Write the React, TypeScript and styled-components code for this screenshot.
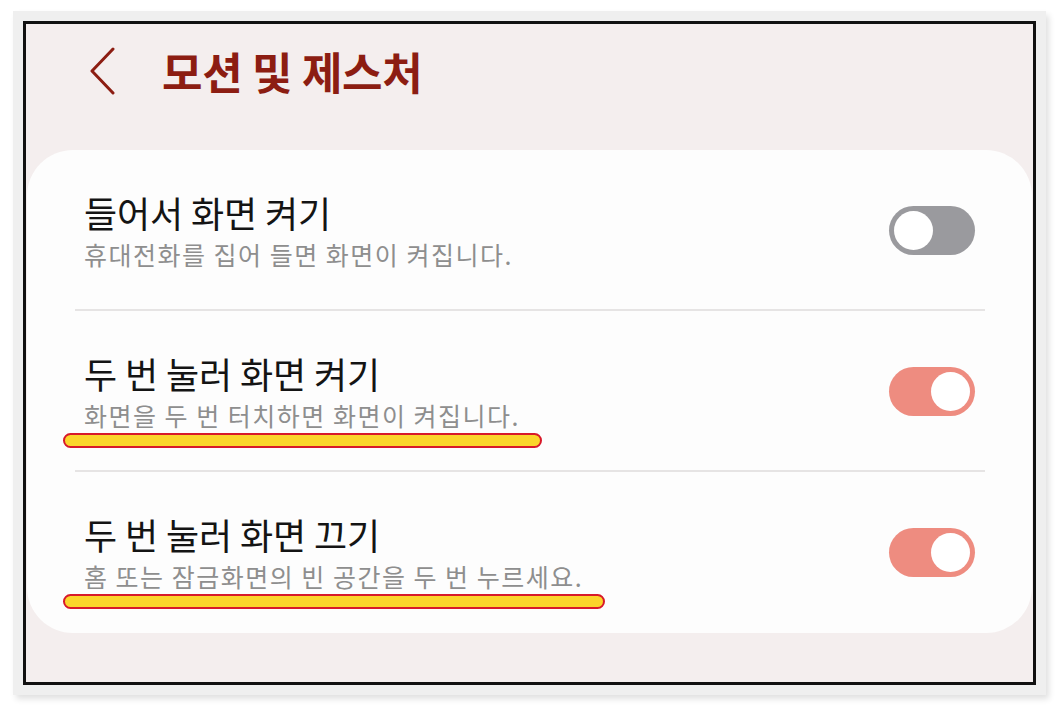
import React from "react";
import styled, { createGlobalStyle } from "styled-components";

const FRAME_BG = "#f4eeee";
const CARD_BG = "#fdfdfd";
const ACCENT = "#8c1d12";
const TITLE = "#141414";
const SUB = "#8e8e8e";
const DIVIDER = "#e6e4e4";
const OFF = "#9a9a9e";
const ON = "#ee8c80";

const GlobalStyle = createGlobalStyle`
  html, body {
    margin: 0;
    padding: 0;
    background: #ffffff;
  }
  body {
    font-family: "Noto Sans CJK KR", "Noto Sans", sans-serif;
  }
`;

const Page = styled.div`
  width: 1060px;
  height: 710px;
  padding: 21px 24px 25px 23px;
  box-sizing: border-box;
`;

const Frame = styled.div`
  height: 664px;
  box-sizing: border-box;
  border: 3px solid #111;
  background: ${FRAME_BG};
  box-shadow: 0 0 0 10px #efefef, 3px 4px 6px 10px rgba(0, 0, 0, 0.12);
  display: flex;
  flex-direction: column;
  overflow: hidden;
`;

const Header = styled.header`
  height: 126px;
  display: flex;
  align-items: center;
  padding-left: 63px;
  gap: 46px;
  box-sizing: border-box;
  padding-bottom: 32px;
`;

const Title = styled.h1`
  margin: 0;
  font-size: 44px;
  font-weight: 700;
  color: ${ACCENT};
  letter-spacing: -0.3px;
`;

const Card = styled.section`
  margin: 0 0 0 1px;
  width: 1005px;
  background: ${CARD_BG};
  border-radius: 46px;
  display: flex;
  flex-direction: column;
`;

const Row = styled.div<{ $last?: boolean }>`
  height: 161px;
  box-sizing: border-box;
  display: flex;
  align-items: center;
  justify-content: space-between;
  padding: 0 57px 0 57px;
  position: relative;
  ${(p) =>
    !p.$last &&
    `&::after {
      content: "";
      position: absolute;
      left: 48px;
      right: 47px;
      bottom: 0;
      height: 2px;
      background: ${DIVIDER};
    }`}
`;

const TextBlock = styled.div`
  display: flex;
  flex-direction: column;
  gap: 3px;
`;

const RowTitle = styled.div`
  font-size: 36px;
  color: ${TITLE};
  line-height: 1.25;
  letter-spacing: -0.1px;
`;

const RowSub = styled.div`
  font-size: 25px;
  color: ${SUB};
  line-height: 1.3;
  letter-spacing: 1.5px;
  position: relative;
  align-self: flex-start;
`;

const Highlight = styled.span`
  position: absolute;
  left: -21px;
  right: -22px;
  top: calc(100% + 1px);
  height: 11px;
  border: 2px solid #d8192a;
  background: #fbd52b;
  border-radius: 8px;
`;

const Track = styled.div<{ $on: boolean }>`
  width: 86px;
  height: 49px;
  border-radius: 25px;
  background: ${(p) => (p.$on ? ON : OFF)};
  display: flex;
  align-items: center;
  justify-content: ${(p) => (p.$on ? "flex-end" : "flex-start")};
  padding: 0 5px;
  box-sizing: border-box;
  flex-shrink: 0;
`;

const Knob = styled.div`
  width: 39px;
  height: 39px;
  border-radius: 50%;
  background: #ffffff;
`;

const BackIcon = () => (
  <svg width="27" height="48" viewBox="0 0 27 48" fill="none">
    <path
      d="M24 2 L3 24 L24 46"
      stroke={ACCENT}
      strokeWidth="3"
      strokeLinecap="round"
      strokeLinejoin="round"
    />
  </svg>
);

const items = [
  {
    title: "들어서 화면 켜기",
    sub: "휴대전화를 집어 들면 화면이 켜집니다.",
    on: false,
    mark: false,
  },
  {
    title: "두 번 눌러 화면 켜기",
    sub: "화면을 두 번 터치하면 화면이 켜집니다.",
    on: true,
    mark: true,
  },
  {
    title: "두 번 눌러 화면 끄기",
    sub: "홈 또는 잠금화면의 빈 공간을 두 번 누르세요.",
    on: true,
    mark: true,
  },
];

export default function App() {
  return (
    <>
      <GlobalStyle />
      <Page>
        <Frame>
          <Header>
            <BackIcon />
            <Title>모션 및 제스처</Title>
          </Header>
          <Card>
            {items.map((it, i) => (
              <Row key={it.title} $last={i === items.length - 1}>
                <TextBlock>
                  <RowTitle>{it.title}</RowTitle>
                  <RowSub>
                    {it.sub}
                    {it.mark && <Highlight />}
                  </RowSub>
                </TextBlock>
                <Track $on={it.on}>
                  <Knob />
                </Track>
              </Row>
            ))}
          </Card>
        </Frame>
      </Page>
    </>
  );
}
